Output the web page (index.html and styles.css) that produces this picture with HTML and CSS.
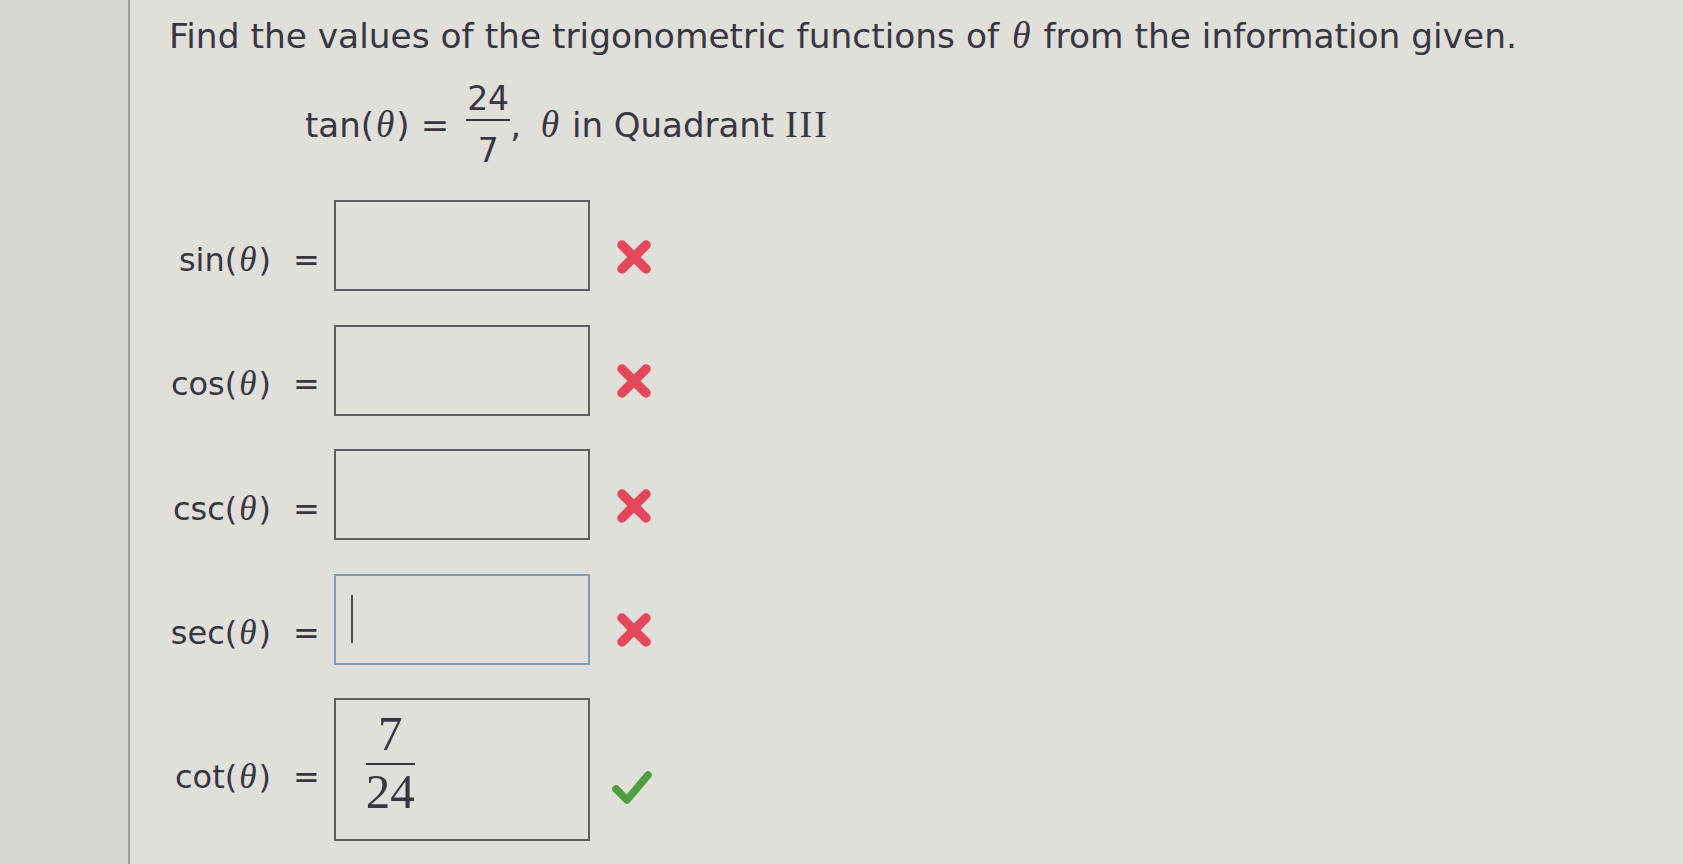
FILE: index.html
```html
<!DOCTYPE html>
<html lang="en">
<head>
    <meta charset="UTF-8">
    <meta name="viewport" content="width=device-width, initial-scale=1.0">
    <title>Trigonometric functions of θ</title>
    <link rel="stylesheet" href="styles.css">
</head>
<body>

<div class="page">
    <aside class="rail"></aside>

    <main class="question">
        <p class="prompt">Find the values of the trigonometric functions of <i class="var">θ</i> from the information given.</p>

        <p class="given">
            <span>tan(<i class="var">θ</i>)</span><span class="op">=</span><span class="frac"><span class="num">24</span><span class="den">7</span></span><span class="comma">,</span>
            <i class="var">θ</i> in Quadrant <span class="roman">III</span>
        </p>

        <div class="answers">
            <!-- sin -->
            <div class="answer-row">
                <span class="label">sin(<i class="var">θ</i>)</span>
                <span class="op">=</span>
                <div class="answer-box"></div>
                <svg class="mark" viewBox="0 0 36 36" aria-label="incorrect">
                    <path d="M6 6 L30 30 M30 6 L6 30" stroke="#e4475a" stroke-width="9.5" stroke-linecap="round" fill="none"/>
                </svg>
            </div>

            <!-- cos -->
            <div class="answer-row">
                <span class="label">cos(<i class="var">θ</i>)</span>
                <span class="op">=</span>
                <div class="answer-box"></div>
                <svg class="mark" viewBox="0 0 36 36" aria-label="incorrect">
                    <path d="M6 6 L30 30 M30 6 L6 30" stroke="#e4475a" stroke-width="9.5" stroke-linecap="round" fill="none"/>
                </svg>
            </div>

            <!-- csc -->
            <div class="answer-row">
                <span class="label">csc(<i class="var">θ</i>)</span>
                <span class="op">=</span>
                <div class="answer-box"></div>
                <svg class="mark" viewBox="0 0 36 36" aria-label="incorrect">
                    <path d="M6 6 L30 30 M30 6 L6 30" stroke="#e4475a" stroke-width="9.5" stroke-linecap="round" fill="none"/>
                </svg>
            </div>

            <!-- sec (focused) -->
            <div class="answer-row">
                <span class="label">sec(<i class="var">θ</i>)</span>
                <span class="op">=</span>
                <div class="answer-box focused"><span class="caret"></span></div>
                <svg class="mark" viewBox="0 0 36 36" aria-label="incorrect">
                    <path d="M6 6 L30 30 M30 6 L6 30" stroke="#e4475a" stroke-width="9.5" stroke-linecap="round" fill="none"/>
                </svg>
            </div>

            <!-- cot -->
            <div class="answer-row tall-row">
                <span class="label">cot(<i class="var">θ</i>)</span>
                <span class="op">=</span>
                <div class="answer-box tall">
                    <span class="frac serif"><span class="num">7</span><span class="den">24</span></span>
                </div>
                <svg class="mark check" viewBox="0 0 40 36" aria-label="correct">
                    <path d="M4 20 L15 31 L36 6" stroke="#4f9e40" stroke-width="7.5" stroke-linecap="round" stroke-linejoin="round" fill="none"/>
                </svg>
            </div>
        </div>
    </main>
</div>

</body>
</html>
```

FILE: styles.css
```css
:root {
    --bg-color: #e0dfda;
    --rail-bg: #d6d6d2;
    --rail-line: #9d9d9b;
    --text-color: #373642;
    --box-border: #5e5e5e;
    --focus-border: #7d9dc0;
    --font-family: "DejaVu Sans", Verdana, sans-serif;
    --math-italic: "Liberation Serif", "DejaVu Serif", serif;
}

html, body {
    margin: 0;
    height: 100%;
}

body {
    font-family: var(--font-family);
    background-color: var(--bg-color);
    color: var(--text-color);
    overflow: hidden;
}

.page {
    display: flex;
    min-height: 100vh;
}

.rail {
    width: 128px;
    flex-shrink: 0;
    background-color: var(--rail-bg);
    border-right: 2px solid var(--rail-line);
}

.question {
    flex: 1;
    padding: 15px 0 0 39px;
    font-size: 32px;
    line-height: 40px;
}

.prompt {
    margin: 0;
    font-size: 34.4px;
    white-space: nowrap;
}

.var {
    font-family: var(--math-italic);
    font-style: italic;
    font-size: 1.1em;
    padding: 0 2px;
}

/* given: tan(θ) = 24/7, θ in Quadrant III */
.given {
    margin: 28px 0 0;
    padding-left: 136px;
    font-size: 34px;
    white-space: nowrap;
}

.given .op {
    margin: 0 17px 0 11px;
}

.frac {
    display: inline-block;
    vertical-align: -25px;
    text-align: center;
    font-size: 33px;
    line-height: 30px;
}

.frac .num {
    display: block;
    padding: 0 1px 5px;
    border-bottom: 2px solid var(--text-color);
}

.frac .den {
    display: block;
    padding-top: 15px;
}

.comma {
    margin-right: 7px;
}

.roman {
    font-family: "Liberation Serif", serif;
    font-size: 38px;
    letter-spacing: 2px;
}

/* answer rows */
.answers {
    margin-top: 34px;
    display: flex;
    flex-direction: column;
    gap: 33.5px;
}

.answer-row {
    display: flex;
    align-items: center;
}

.answer-row .label {
    width: 102px;
    text-align: right;
    white-space: nowrap;
    margin-top: 28px;
}

.answer-row .op {
    margin: 28px 14px 0 22px;
}

.answer-box {
    width: 256px;
    height: 91px;
    box-sizing: border-box;
    border: 2px solid var(--box-border);
    display: flex;
    align-items: center;
    padding-left: 15px;
}

.answer-box.focused {
    border-color: var(--focus-border);
}

.caret {
    width: 2px;
    height: 48px;
    background-color: #4a4a4a;
}

.mark {
    width: 36px;
    height: 36px;
    margin: 22px 0 0 26px;
}

.tall-row .label {
    margin-top: 14px;
}

.tall-row .op {
    margin-top: 14px;
}

.answer-box.tall {
    height: 143px;
    padding-left: 30px;
}

.frac.serif {
    font-family: "Liberation Serif", serif;
    font-size: 49px;
    line-height: 44px;
    vertical-align: baseline;
    margin-top: -13px;
}

.frac.serif .num {
    padding: 0 0 7px;
}

.frac.serif .den {
    padding-top: 5px;
}

.mark.check {
    width: 40px;
    height: 36px;
    margin: 34px 0 0 22px;
}
```
